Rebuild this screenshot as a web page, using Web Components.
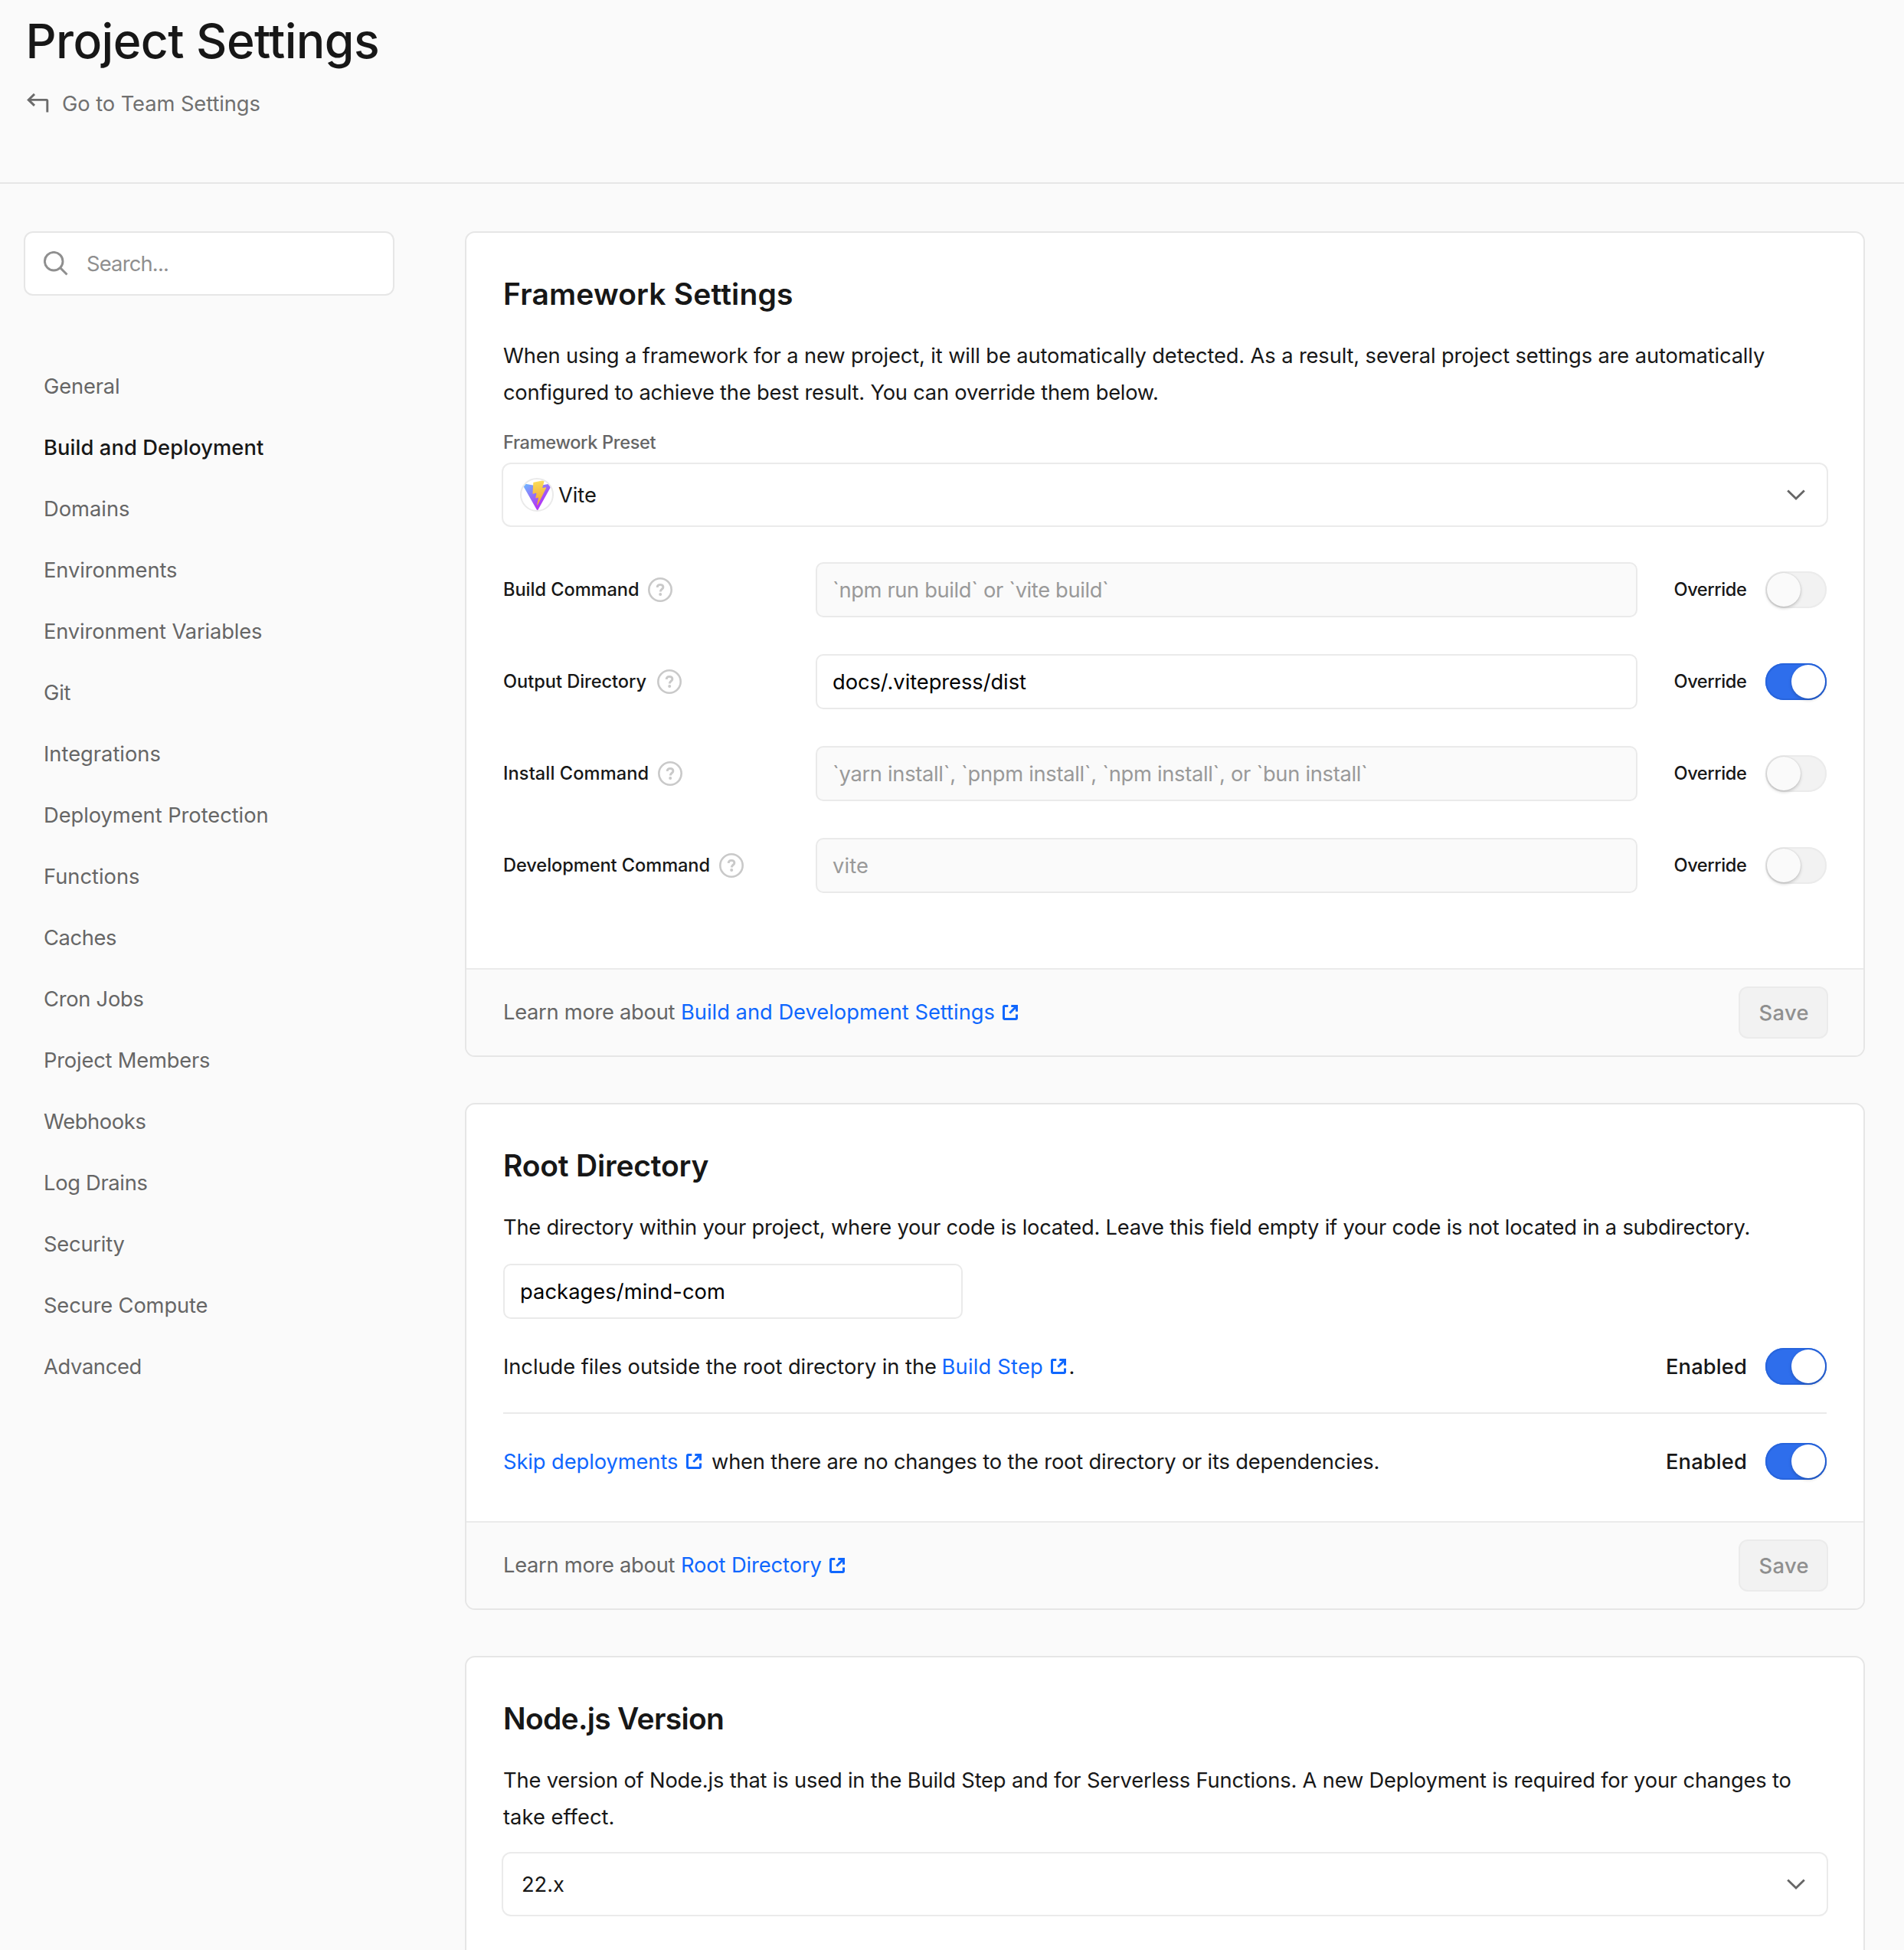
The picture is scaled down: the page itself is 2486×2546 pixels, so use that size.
<!DOCTYPE html>
<html lang="en">
<head>
<meta charset="utf-8">
<title>Project Settings</title>
<style>
  html, body { margin: 0; background: #fafafa; }
  body { font: 400 27.3px/48px Inter, "Liberation Sans", sans-serif; color: #171717; height: 2546px; overflow: hidden; }
</style>
</head>
<body>
<settings-page></settings-page>

<script>
// Tracks its text so that the glyphs span exactly `w` pixels.
const ruler = document.createElement('canvas').getContext('2d');
class FitText extends HTMLElement {
  constructor() {
    super();
    this.attachShadow({ mode: 'open' }).innerHTML =
      '<style>:host{display:inline-block;white-space:pre;flex:none;padding-top:var(--drop,0px)}</style><slot></slot>';
  }
  connectedCallback() {
    const w = parseFloat(this.getAttribute('w'));
    const text = this.textContent;
    const cs = getComputedStyle(this);
    ruler.font = `${cs.fontWeight} ${cs.fontSize} ${cs.fontFamily}`;
    const natural = ruler.measureText(text).actualBoundingBoxRight;
    this.style.width = w + 'px';
    if (text.length > 1) this.style.letterSpacing = ((w - natural) / (text.length - 1)).toFixed(3) + 'px';
  }
}
customElements.define('fit-text', FitText);

const define = (name, html) => customElements.define(name, class extends HTMLElement {
  constructor() {
    super();
    const t = document.createElement('template');
    t.innerHTML = html;
    this.attachShadow({ mode: 'open' }).append(t.content.cloneNode(true));
  }
});

define('icon-back', `
<style>:host{display:block;width:30px;height:28px;flex:none}svg{display:block}</style>
<svg width="30" height="28" viewBox="0 0 30 28" fill="none" stroke="#6b6b6b" stroke-width="2.9">
<path d="M10 1.9 2.2 9.4 10 16.9M2.6 9.4H25.600a1.2 1.2 0 0 1 1.2 1.2V25.6"/></svg>`);

define('icon-search', `
<style>:host{display:block;width:32px;height:32px;flex:none}svg{display:block}</style>
<svg width="32" height="32" viewBox="0 0 32 32" fill="none" stroke="#8f8f8f" stroke-width="2.9">
<circle cx="13.2" cy="13.2" r="11.8"/><path d="m21.6 21.6 8.9 8.9"/></svg>`);

define('icon-help', `
<style>:host{display:block;width:32px;height:32px;flex:none}svg{display:block}</style>
<svg width="32" height="32" viewBox="0 0 32 32" fill="none" stroke="#c9c9c9">
<circle cx="16" cy="16" r="14.7" stroke-width="2.6"/>
<path d="M12.1 12.9c.2-2.200 1.800-3.500 3.900-3.500 2.300 0 3.900 1.300 3.900 3.300 0 2.500-3.500 2.600-3.500 5.300v.5" stroke-width="2.9"/>
<circle cx="16.200" cy="22" r="2" fill="#c9c9c9" stroke="none"/></svg>`);

define('icon-external', `
<style>:host{display:block;width:20px;height:20px;flex:none}svg{display:block}</style>
<svg width="20" height="20" viewBox="0 0 20 20" fill="none" stroke="#0f67fe" stroke-width="3">
<path d="M7.300 1.500H2.400a.9.9 0 0 0-.9.9V17.600a.9.9 0 0 0 .9.9H17.600a.9.900 0 0 0 .9-.9V12.600"/>
<path d="M11.300 1.500H18.500V8.800M18 2 9.300 10.700"/></svg>`);

define('icon-chevron', `
<style>:host{display:block;width:24px;height:14px;flex:none}svg{display:block}</style>
<svg width="24" height="14" viewBox="0 0 24 14" fill="none" stroke="#666" stroke-width="2.800">
<path d="m1.200 1.400 10.800 10.600 10.800-10.600"/></svg>`);

define('logo-vite', `
<style>:host{display:flex;box-sizing:border-box;width:44px;height:44px;flex:none;border-radius:50%;border:2px solid #eaeaea;overflow:hidden;align-items:center;justify-content:center;background:#fff}svg{display:block;flex:none}</style>
<svg width="39" height="39" viewBox="0 0 256 257">
<defs>
<linearGradient id="v" x1="-.8%" x2="57.6%" y1="7.700%" y2="78.400%"><stop offset="0%" stop-color="#6cb8ff"/><stop offset="100%" stop-color="#b03af5"/></linearGradient>
<linearGradient id="b" x1="43.400%" x2="50.300%" y1="2.200%" y2="89%"><stop offset="0%" stop-color="#fae070"/><stop offset="8.300%" stop-color="#f9d855"/><stop offset="100%" stop-color="#f2a83a"/></linearGradient>
</defs>
<path fill="url(#v)" d="M255.153 37.938L134.897 252.976c-2.483 4.440-8.862 4.466-11.382.048L.875 37.958c-2.746-4.814 1.371-10.646 6.827-9.670l120.385 21.517a6.537 6.537 0 0 0 2.322-.004l117.867-21.483c5.438-.991 9.574 4.796 6.877 9.620Z"/>
<path fill="url(#b)" d="M185.432.063L96.440 17.501a3.268 3.268 0 0 0-2.634 3.014l-5.474 92.456a3.268 3.268 0 0 0 3.997 3.378l24.777-5.718c2.318-.535 4.413 1.507 3.936 3.838l-7.361 36.047c-.495 2.426 1.782 4.500 4.151 3.780l15.304-4.649c2.372-.720 4.652 1.360 4.150 3.788l-11.698 56.621c-.732 3.542 3.979 5.473 5.943 2.437l1.313-2.028l72.516-144.720c1.215-2.423-.880-5.186-3.540-4.672l-25.505 4.922c-2.396.462-4.435-1.770-3.759-4.114l16.646-57.705c.677-2.350-1.370-4.583-3.769-4.113Z"/>
</svg>`);

define('toggle-switch', `
<style>
:host{display:flex;box-sizing:border-box;width:80px;height:48px;flex:none;padding:2px;border-radius:24px;background:#f2f2f2;box-shadow:inset 0 0 0 2px #ebebeb}
:host([on]){justify-content:flex-end;background:#2e6eec;box-shadow:inset 0 0 0 2px #2764dc}
i{display:block;width:44px;height:44px;border-radius:50%;background:#fafafa;box-shadow:0 2px 4px rgba(0,0,0,.2),0 0 2px rgba(0,0,0,.12)}
:host([on]) i{background:#fff;box-shadow:0 2px 4px rgba(0,0,0,.2)}
</style><i></i>`);

define('text-input', `
<style>
:host{display:flex;box-sizing:border-box;height:72px;border:2px solid #eaeaea;border-radius:10px;background:#fff;color:#000;align-items:center;padding-left:20px;--drop:2px}
:host([disabled]){background:#fafafa;color:#999}
</style><slot></slot>`);

define('select-box', `
<style>
:host{display:flex;box-sizing:border-box;height:84px;margin:0 -2px;border:2px solid #ebebeb;border-radius:12px;background:#fff;align-items:center;justify-content:space-between;padding:0 28px 0 22px;--drop:2px}
div{display:flex;align-items:center;gap:6px}
</style><div><slot></slot></div><icon-chevron></icon-chevron>`);

define('text-link', `
<style>:host{display:inline-flex;align-items:center;gap:10.500px;color:#0f67fe}</style><slot></slot><icon-external></icon-external>`);

define('command-row', `
<style>
:host{display:grid;grid-template-columns:408px 1073px 1fr;align-items:center;height:72px;font-weight:500;font-size:23.600px}
.label,.side{display:flex;align-items:center}
.label{gap:13px}
.side{justify-content:flex-end;gap:25px}
::slotted(text-input){font-weight:400;font-size:27.300px}
</style>
<div class="label"><slot name="label"></slot><icon-help></icon-help></div>
<slot></slot>
<div class="side"><fit-text w="94.500">Override</fit-text><slot name="toggle"></slot></div>`);

define('toggle-row', `
<style>
:host{display:flex;align-items:center;justify-content:space-between;height:48px;--drop:2px}
.text,.side{display:flex;align-items:center}
.side{gap:26px;font-weight:500}
</style>
<div class="text"><slot></slot></div>
<div class="side"><fit-text w="104">Enabled</fit-text><toggle-switch on></toggle-switch></div>`);

define('settings-card', `
<style>
:host{display:block;box-sizing:border-box;border:2px solid #e6e6e6;border-radius:13px;background:#fff;overflow:hidden;flex:none}
.body{padding:56px 48px 0}
h2{margin:0 0 32px;font-size:39px;line-height:48px;font-weight:600}
</style>
<div class="body"><h2><slot name="title"></slot></h2><slot></slot></div><slot name="footer"></slot>`);

define('card-footer', `
<style>
:host{display:flex;align-items:center;justify-content:space-between;box-sizing:border-box;height:114px;border-top:2px solid #ebebeb;background:#fafafa;padding:0 46px 0 48px;color:#666}
.text{display:flex;align-items:center;gap:7.500px}
.save{display:flex;box-sizing:border-box;width:117px;height:68px;border:2px solid #ebebeb;border-radius:12px;background:#f2f2f2;color:#8f8f8f;font-weight:500;align-items:center;padding-left:24.500px;--drop:2px}
</style>
<div class="text"><fit-text w="224.500">Learn more about</fit-text><slot></slot></div>
<div class="save"><fit-text w="64">Save</fit-text></div>`);

define('page-header', `
<style>
:host{display:flex;flex-direction:column;box-sizing:border-box;height:240px;border-bottom:2px solid #e6e6e6;padding:13px 0 0 33.500px}
h1{margin:0;font-size:62.500px;line-height:80px;font-weight:500}
.back{display:flex;align-items:center;gap:16.500px;margin-top:17px;padding-left:1px;color:#707070;--drop:2px}
</style>
<h1><fit-text w="459.500">Project Settings</fit-text></h1>
<div class="back"><icon-back></icon-back><fit-text w="258.500">Go to Team Settings</fit-text></div>`);

define('side-nav', `
<style>
:host{display:block;width:484px;flex:none}
.search{display:flex;box-sizing:border-box;height:84px;border:2px solid #e6e6e6;border-radius:12px;background:#fff;align-items:center;padding-left:24px;gap:24px;color:#8f8f8f;--drop:2px}
nav{display:flex;flex-direction:column;gap:32px;margin-top:95px;padding-left:26px;color:#666}
a{display:block;height:48px}
.on{color:#171717;font-weight:500}
</style>
<div class="search"><icon-search></icon-search><fit-text w="106">Search...</fit-text></div>
<nav>
<a><fit-text w="98">General</fit-text></a>
<a class="on"><fit-text w="287">Build and Deployment</fit-text></a>
<a><fit-text w="112">Domains</fit-text></a>
<a><fit-text w="174">Environments</fit-text></a>
<a><fit-text w="285">Environment Variables</fit-text></a>
<a><fit-text w="35.500">Git</fit-text></a>
<a><fit-text w="152.500">Integrations</fit-text></a>
<a><fit-text w="292.500">Deployment Protection</fit-text></a>
<a><fit-text w="125">Functions</fit-text></a>
<a><fit-text w="95">Caches</fit-text></a>
<a><fit-text w="130.500">Cron Jobs</fit-text></a>
<a><fit-text w="217">Project Members</fit-text></a>
<a><fit-text w="133.500">Webhooks</fit-text></a>
<a><fit-text w="135.500">Log Drains</fit-text></a>
<a><fit-text w="105.500">Security</fit-text></a>
<a><fit-text w="213.500">Secure Compute</fit-text></a>
<a><fit-text w="126.500">Advanced</fit-text></a>
</nav>`);

define('settings-page', `
<style>
:host{display:block}
main{display:flex;gap:92px;padding:62px 51px 0 31px}
.cards{display:flex;flex-direction:column;gap:60px;flex:1}
p{margin:0 0 -1px;padding-top:1px}
p fit-text{display:block}
.caption{margin:30px 0 14px;font-size:23.600px;line-height:24px;font-weight:500;color:#666;height:24px}
.rows{display:flex;flex-direction:column;gap:48px;padding:46px 0 98px}
.root-input{width:600px;margin:24px 0 38px}
hr{border:0;height:2px;background:#eaeaea;margin:36px 0 38px}
.last{margin-bottom:54px}
.version{margin-top:22px;margin-bottom:120px}
</style>
<page-header></page-header>
<main>
<side-nav></side-nav>
<div class="cards">
  <settings-card>
    <fit-text slot="title" w="377">Framework Settings</fit-text>
    <p><fit-text w="1647">When using a framework for a new project, it will be automatically detected. As a result, several project settings are automatically</fit-text>
    <fit-text w="854">configured to achieve the best result. You can override them below.</fit-text></p>
    <div class="caption"><fit-text w="199.500">Framework Preset</fit-text></div>
    <select-box><logo-vite></logo-vite><fit-text w="49">Vite</fit-text></select-box>
    <div class="rows">
      <command-row><fit-text slot="label" w="176">Build Command</fit-text>
        <text-input disabled><fit-text w="359">\`npm run build\` or \`vite build\`</fit-text></text-input><toggle-switch slot="toggle"></toggle-switch></command-row>
      <command-row><fit-text slot="label" w="187.500">Output Directory</fit-text>
        <text-input><fit-text w="253">docs/.vitepress/dist</fit-text></text-input><toggle-switch slot="toggle" on></toggle-switch></command-row>
      <command-row><fit-text slot="label" w="188.500">Install Command</fit-text>
        <text-input disabled><fit-text w="697">\`yarn install\`, \`pnpm install\`, \`npm install\`, or \`bun install\`</fit-text></text-input><toggle-switch slot="toggle"></toggle-switch></command-row>
      <command-row><fit-text slot="label" w="268.500">Development Command</fit-text>
        <text-input disabled><fit-text w="46">vite</fit-text></text-input><toggle-switch slot="toggle"></toggle-switch></command-row>
    </div>
    <card-footer slot="footer"><text-link><fit-text w="409.500">Build and Development Settings</fit-text></text-link></card-footer>
  </settings-card>

  <settings-card>
    <fit-text slot="title" w="268.500">Root Directory</fit-text>
    <p><fit-text w="1626.500">The directory within your project, where your code is located. Leave this field empty if your code is not located in a subdirectory.</fit-text></p>
    <text-input class="root-input"><fit-text w="266">packages/mind-com</fit-text></text-input>
    <toggle-row><fit-text w="565" style="margin-right:7.500px">Include files outside the root directory in the</fit-text><text-link><fit-text w="131.500">Build Step</fit-text></text-link><fit-text w="8" style="margin-left:4px">.</fit-text></toggle-row>
    <hr>
    <toggle-row class="last"><text-link><fit-text w="228">Skip deployments</fit-text></text-link><fit-text w="870.500" style="margin-left:13.500px">when there are no changes to the root directory or its dependencies.</fit-text></toggle-row>
    <card-footer slot="footer"><text-link><fit-text w="183.500">Root Directory</fit-text></text-link></card-footer>
  </settings-card>

  <settings-card>
    <fit-text slot="title" w="287">Node.js Version</fit-text>
    <p><fit-text w="1680.500">The version of Node.js that is used in the Build Step and for Serverless Functions. A new Deployment is required for your changes to</fit-text>
    <fit-text w="143.500">take effect.</fit-text></p>
    <select-box class="version"><fit-text w="56" style="margin-left:2px">22.x</fit-text></select-box>
  </settings-card>
</div>
</main>`);
</script>
</body>
</html>
